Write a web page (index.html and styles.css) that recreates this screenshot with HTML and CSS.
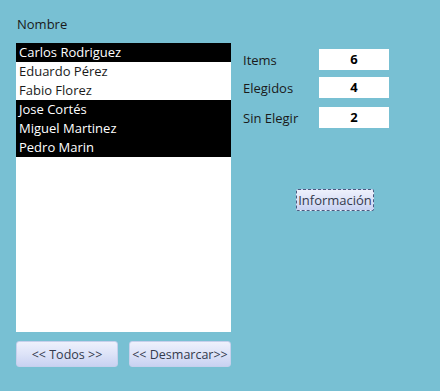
FILE: index.html
```html
<!DOCTYPE html>
<html>
<head>
  <meta charset="UTF-8">
  <link rel="stylesheet" href="styles.css">
</head>
<body>
  <div class="form">
    <div class="left-col">
      <div class="field-label">Nombre</div>
      <div class="list-box">
        <div class="list-item selected">Carlos Rodriguez</div>
        <div class="list-item">Eduardo Pérez</div>
        <div class="list-item">Fabio Florez</div>
        <div class="list-item selected">Jose Cortés</div>
        <div class="list-item selected">Miguel Martinez</div>
        <div class="list-item selected">Pedro Marin</div>
      </div>
      <div class="button-row">
        <button class="form-button wide">&lt;&lt; Todos &gt;&gt;</button>
        <button class="form-button wide">&lt;&lt; Desmarcar&gt;&gt;</button>
      </div>
    </div>
    <div class="right-col">
      <div class="stat-row">
        <span class="stat-label">Items</span>
        <span class="stat-box">6</span>
      </div>
      <div class="stat-row">
        <span class="stat-label">Elegidos</span>
        <span class="stat-box">4</span>
      </div>
      <div class="stat-row third">
        <span class="stat-label">Sin Elegir</span>
        <span class="stat-box">2</span>
      </div>
      <div class="info-wrap">
        <button class="form-button info">Información</button>
      </div>
    </div>
  </div>
</body>
</html>
```

FILE: styles.css
```css
body {
  margin: 0;
  padding: 0;
  width: 440px;
  height: 391px;
  background-color: #78c0d3;
  font-family: "Open Sans", "Liberation Sans", sans-serif;
  font-size: 13px;
  color: #000000;
  overflow: hidden;
}

.form {
  display: flex;
  padding: 14px 0 0 16px;
}

.left-col {
  width: 215px;
  display: flex;
  flex-direction: column;
}

.field-label {
  height: 20px;
  line-height: 20px;
  margin-bottom: 9px;
  padding-left: 1px;
  color: #1a1a1a;
}

.list-box {
  background-color: #ffffff;
  height: 289px;
}

.list-item {
  height: 19px;
  line-height: 19px;
  padding-left: 3px;
  color: #1a1a1a;
  white-space: nowrap;
}

.list-item.selected {
  background-color: #000000;
  color: #ffffff;
}

.button-row {
  display: flex;
  justify-content: space-between;
  margin-top: 9px;
}

.form-button {
  font-family: inherit;
  font-size: 12.5px;
  color: #333a4d;
  border: 1px solid #c6d0ec;
  border-radius: 3px;
  background: linear-gradient(to bottom, #eef1fc 0%, #dde3f8 50%, #c9d2f2 100%);
  padding: 0;
  margin: 0;
}

.form-button.wide {
  width: 102px;
  height: 26px;
}

.right-col {
  display: flex;
  flex-direction: column;
  padding-left: 12px;
  padding-top: 35px;
}

.stat-row {
  display: flex;
  align-items: center;
  height: 21px;
  margin-bottom: 7px;
}

.stat-row.third {
  margin-top: 2px;
}

.stat-label {
  width: 76px;
  color: #1a1a1a;
}

.stat-box {
  width: 70px;
  height: 21px;
  line-height: 21px;
  background-color: #ffffff;
  text-align: center;
  font-weight: bold;
}

.info-wrap {
  display: flex;
  padding-left: 53px;
  margin-top: 54px;
}

.form-button.info {
  width: 78px;
  height: 22px;
  font-size: 13px;
  border: 1px dashed #4a5a80;
  border-radius: 2px;
}
```
